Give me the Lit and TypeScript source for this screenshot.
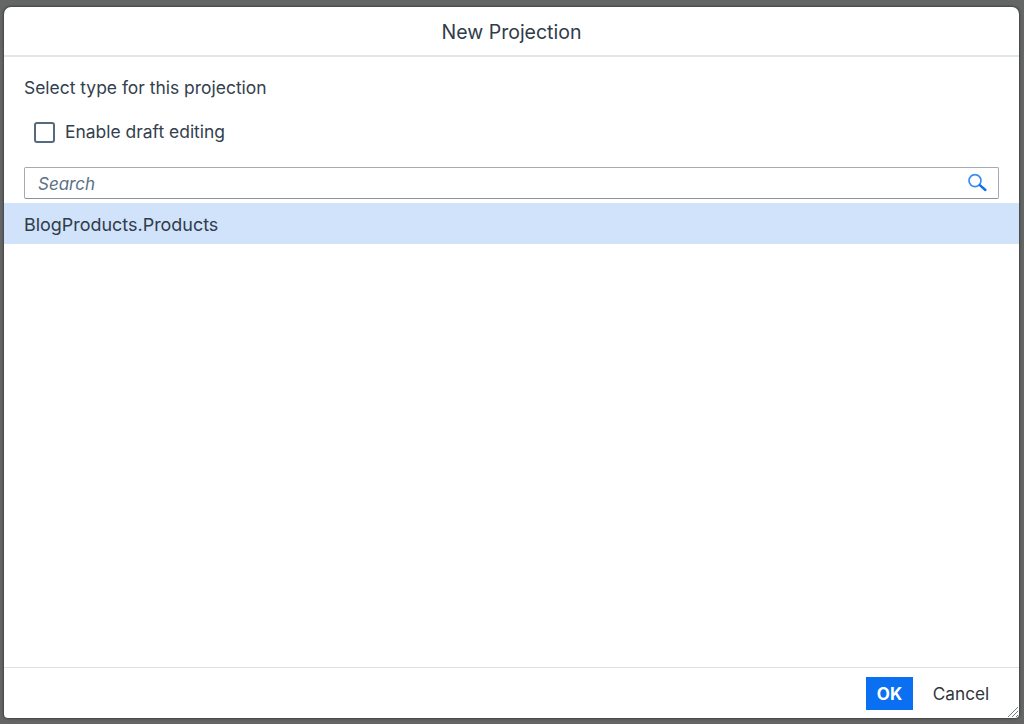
import { LitElement, html, css } from "lit";
import { customElement } from "lit/decorators.js";

@customElement("app-root")
export class AppRoot extends LitElement {
  static styles = css`
    :host {
      display: block;
      width: 1024px;
      height: 724px;
      background: #646565;
      font-family: Inter, "Liberation Sans", sans-serif;
      color: #32363a;
    }
    .page {
      box-sizing: border-box;
      height: 724px;
      padding: 7px 5px 6px 4px;
      display: flex;
    }
    .dialog {
      position: relative;
      flex: 1;
      display: flex;
      flex-direction: column;
      background: #fff;
      border-radius: 7px 7px 4px 4px;
      overflow: hidden;
      box-shadow: 0 0 2px 1px #434444;
    }
    header {
      height: 50px;
      flex: none;
      box-sizing: border-box;
      border-bottom: 2px solid #e4e5e6;
      display: flex;
      align-items: center;
      justify-content: center;
      font-size: 19.5px;
      color: #2f3c4a;
      padding-top: 2px;
    }
    .content {
      flex: 1;
      display: flex;
      flex-direction: column;
      min-height: 0;
    }
    .intro {
      margin: 20px 0 0 20px;
      font-size: 17.45px;
      line-height: 22px;
      color: #33404e;
    }
    .check {
      margin: 22px 0 0 30px;
      display: flex;
      align-items: center;
      gap: 10px;
      font-size: 17.45px;
      line-height: 22px;
      color: #33404e;
    }
    .box {
      width: 17px;
      height: 17px;
      border: 2px solid #566a7e;
      border-radius: 3px;
      background: #fff;
    }
    .search {
      margin: 24px 20px 0 20px;
      height: 32px;
      box-sizing: border-box;
      border: 1px solid #a3aab1;
      border-bottom-color: #8a939c;
      border-radius: 2px;
      display: flex;
      align-items: center;
      padding: 0 10px 0 13px;
    }
    .search span {
      flex: 1;
      padding-top: 2px;
      font-size: 17px;
      font-style: italic;
      color: #5b7086;
    }
    .row {
      margin-top: 4px;
      height: 41px;
      box-sizing: border-box;
      padding: 2px 0 0 20px;
      background: #d1e2fb;
      display: flex;
      align-items: center;
      font-size: 17.95px;
      color: #2f3c4a;
    }
    footer {
      height: 51px;
      flex: none;
      box-sizing: border-box;
      border-top: 1px solid #dfe0e1;
      display: flex;
      align-items: center;
      justify-content: flex-end;
      padding: 1px 20px 0 0;
      gap: 10px;
    }
    .ok {
      width: 47px;
      height: 33px;
      background: #0a6ff0;
      color: #fff;
      font-weight: 700;
      font-size: 17px;
      display: flex;
      align-items: center;
      justify-content: center;
    }
    .cancel {
      width: 76px;
      height: 33px;
      font-size: 17.2px;
      color: #32363a;
      display: flex;
      align-items: center;
      justify-content: center;
    }
    .grip {
      position: absolute;
      right: 0;
      bottom: 0;
    }
  `;

  render() {
    return html`
      <div class="page">
        <div class="dialog">
          <header>New Projection</header>
          <div class="content">
            <div class="intro">Select type for this projection</div>
            <label class="check"><span class="box"></span>Enable draft editing</label>
            <div class="search">
              <span>Search</span>
              <svg width="20" height="20" viewBox="0 0 20 20" fill="none">
                <circle cx="7" cy="7.6" r="6" stroke="#3d8bf0" stroke-width="1.7"></circle>
                <path d="M11.8 12.2l5.6 4.8" stroke="#0a6ff0" stroke-width="2.4" stroke-linecap="round"></path>
              </svg>
            </div>
            <div class="row">BlogProducts.Products</div>
          </div>
          <footer>
            <div class="ok">OK</div>
            <div class="cancel">Cancel</div>
          </footer>
          <svg class="grip" width="12" height="12" viewBox="0 0 12 12" fill="none">
            <path d="M11 1L1 11M11 5L5 11M11 9L9 11" stroke="#7b7c7d" stroke-width="1"></path>
          </svg>
        </div>
      </div>
    `;
  }
}
